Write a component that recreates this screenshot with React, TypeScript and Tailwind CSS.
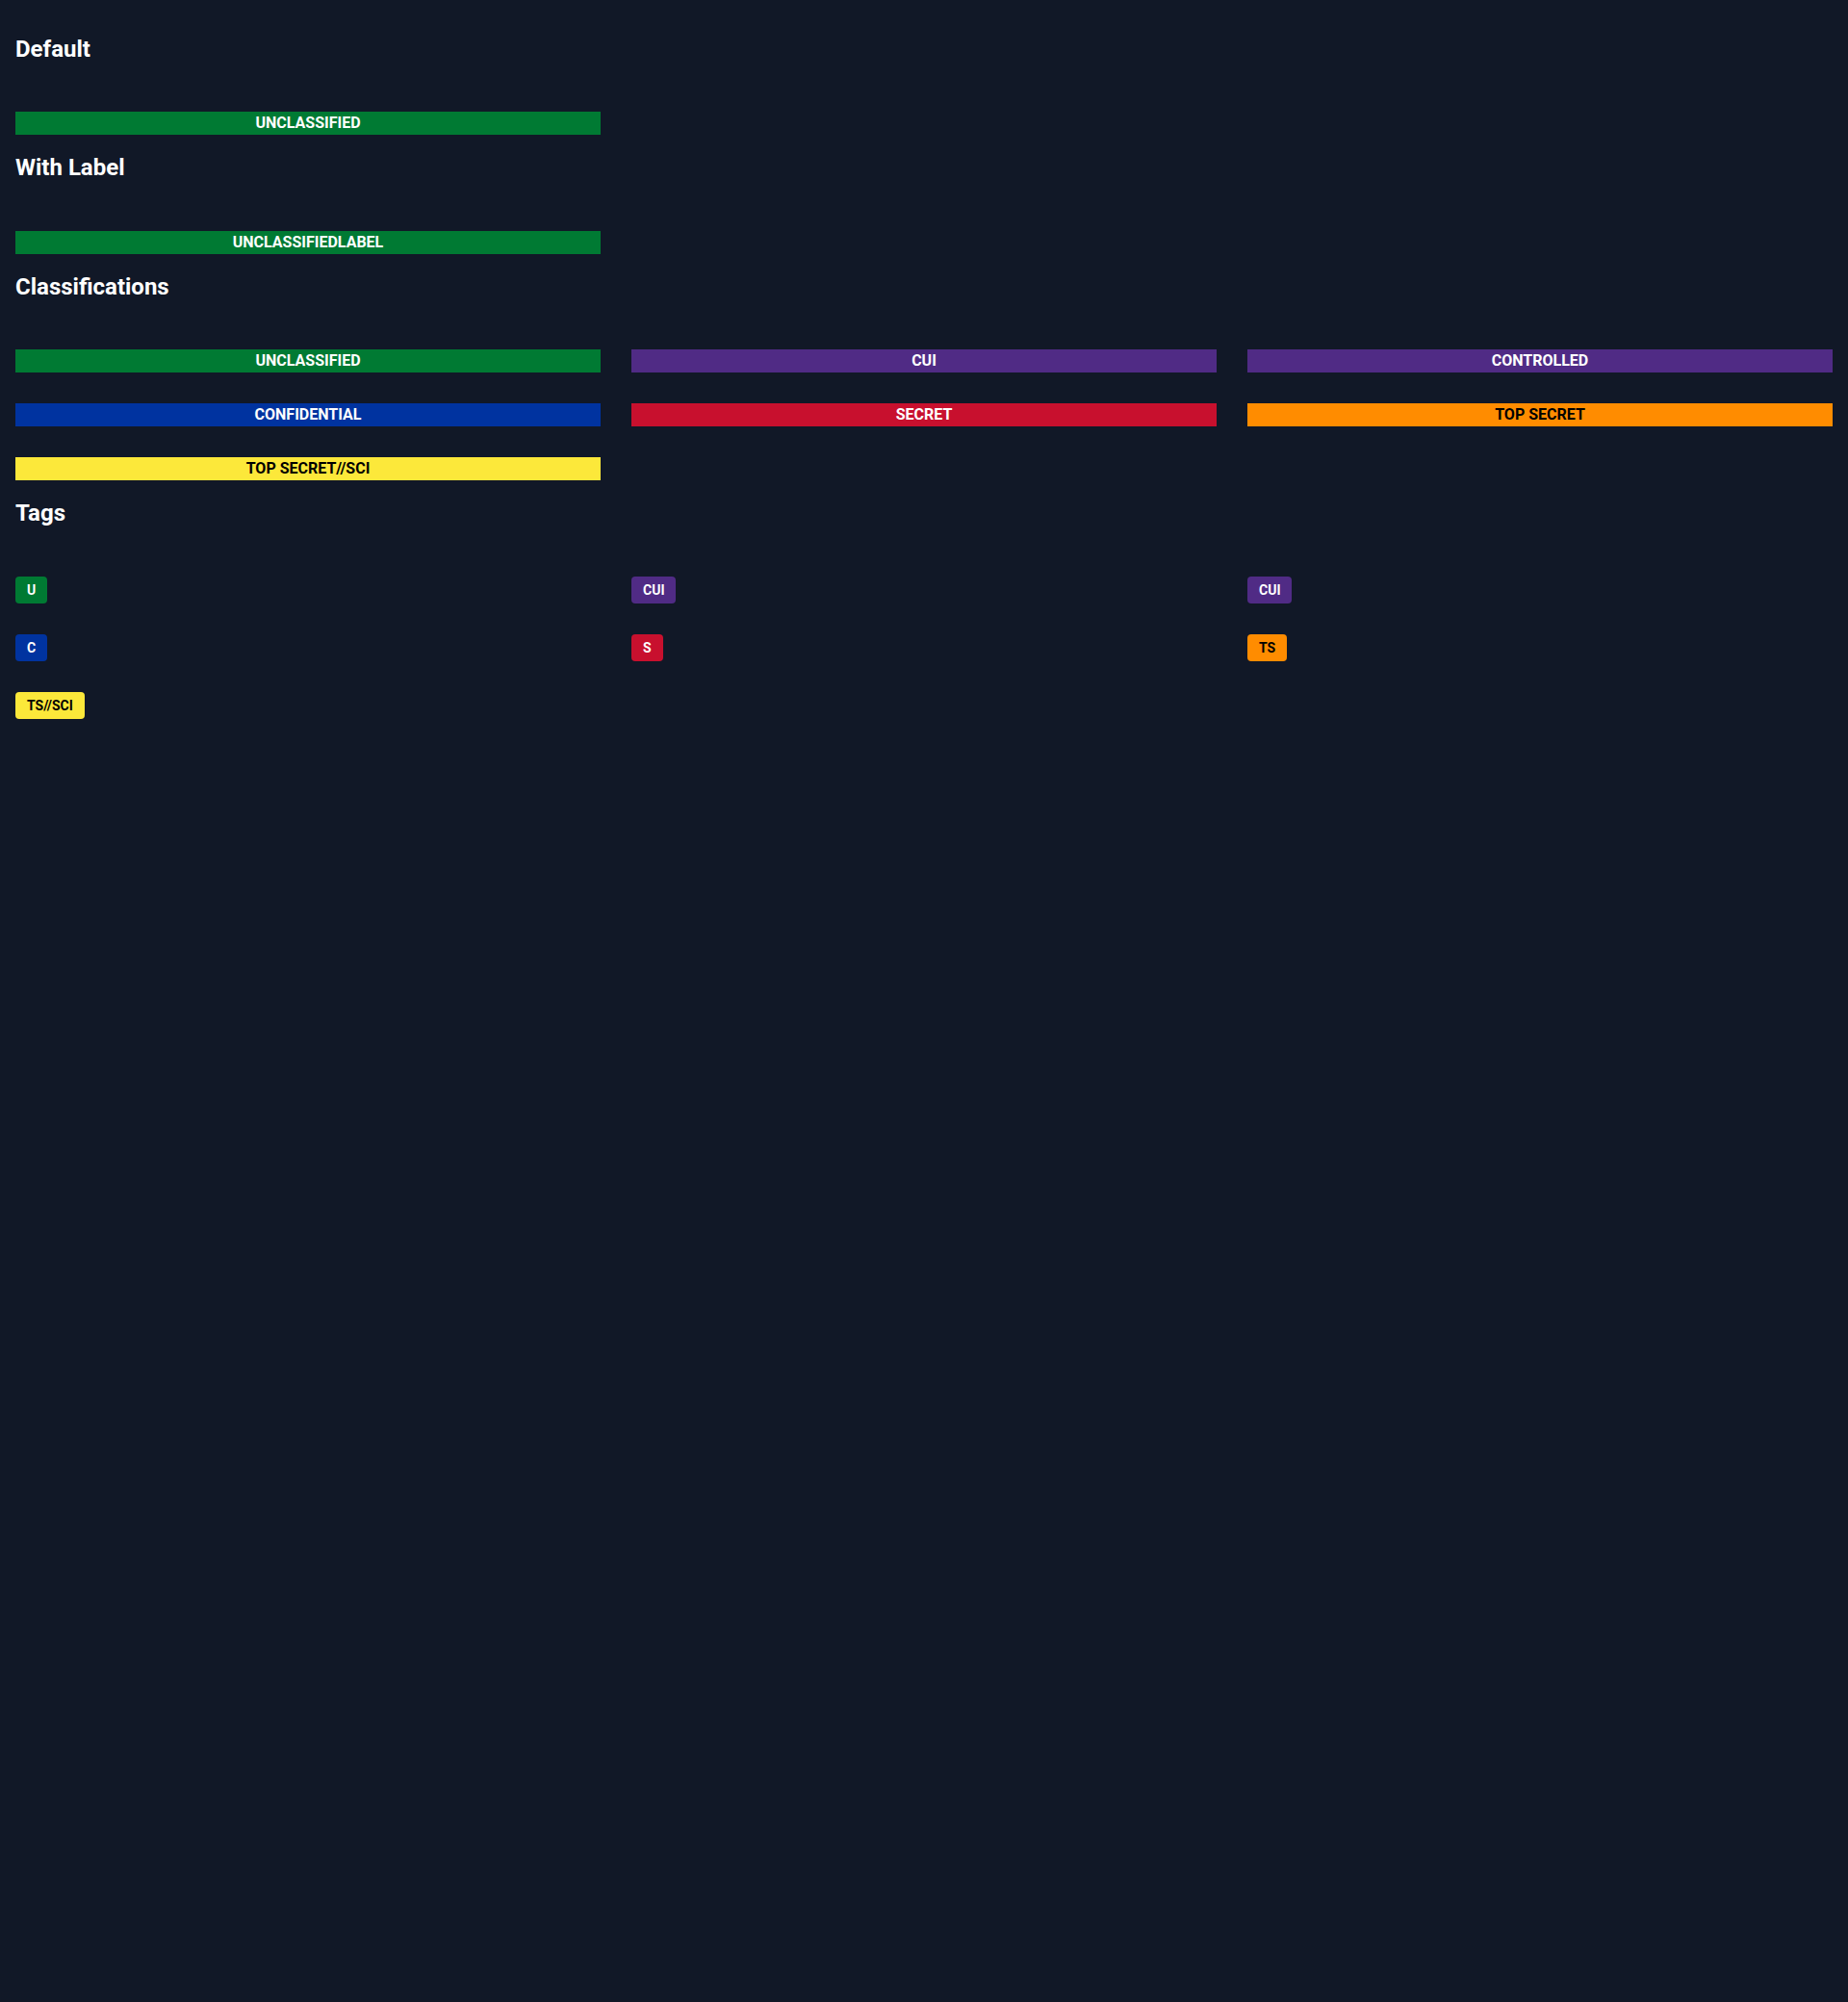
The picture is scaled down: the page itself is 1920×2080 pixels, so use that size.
import React from "react";

type Item = { label: string; tag: string; bg: string; fg: string };

const items: Item[] = [
  { label: "UNCLASSIFIED", tag: "U", bg: "bg-[#007a33]", fg: "text-white" },
  { label: "CUI", tag: "CUI", bg: "bg-[#502b85]", fg: "text-white" },
  { label: "CONTROLLED", tag: "CUI", bg: "bg-[#502b85]", fg: "text-white" },
  { label: "CONFIDENTIAL", tag: "C", bg: "bg-[#0033a0]", fg: "text-white" },
  { label: "SECRET", tag: "S", bg: "bg-[#c8102e]", fg: "text-white" },
  { label: "TOP SECRET", tag: "TS", bg: "bg-[#ff8c00]", fg: "text-black" },
  { label: "TOP SECRET//SCI", tag: "TS//SCI", bg: "bg-[#fce83a]", fg: "text-black" },
];

function Banner({ item, text }: { item: Item; text?: string }) {
  return (
    <div
      className={`${item.bg} ${item.fg} h-6 w-full text-center text-[16px] font-bold leading-6`}
    >
      {text ?? item.label}
    </div>
  );
}

function Tag({ item }: { item: Item }) {
  return (
    <span
      className={`${item.bg} ${item.fg} inline-block rounded px-3 py-1 text-[14px] font-bold leading-5`}
    >
      {item.tag}
    </span>
  );
}

function Heading({ children }: { children: React.ReactNode }) {
  return (
    <h2 className="mt-[18px] mb-[49.5px] text-2xl font-bold leading-8 text-white">
      {children}
    </h2>
  );
}

export default function App() {
  return (
    <div
      className="min-h-[2080px] w-full bg-[#111827] px-4 pt-[16.5px]"
      style={{ fontFamily: "Roboto, 'Liberation Sans', sans-serif" }}
    >
      <div className="flex flex-col">
        <Heading>Default</Heading>
        <div className="grid grid-cols-3 gap-8">
          <Banner item={items[0]} />
        </div>

        <Heading>With Label</Heading>
        <div className="grid grid-cols-3 gap-8">
          <Banner item={items[0]} text="UNCLASSIFIEDLABEL" />
        </div>

        <Heading>Classifications</Heading>
        <div className="grid grid-cols-3 gap-8">
          {items.map((it) => (
            <Banner key={it.label} item={it} />
          ))}
        </div>

        <Heading>Tags</Heading>
        <div className="grid grid-cols-3 justify-items-start gap-8">
          {items.map((it) => (
            <Tag key={it.label} item={it} />
          ))}
        </div>
      </div>
    </div>
  );
}
